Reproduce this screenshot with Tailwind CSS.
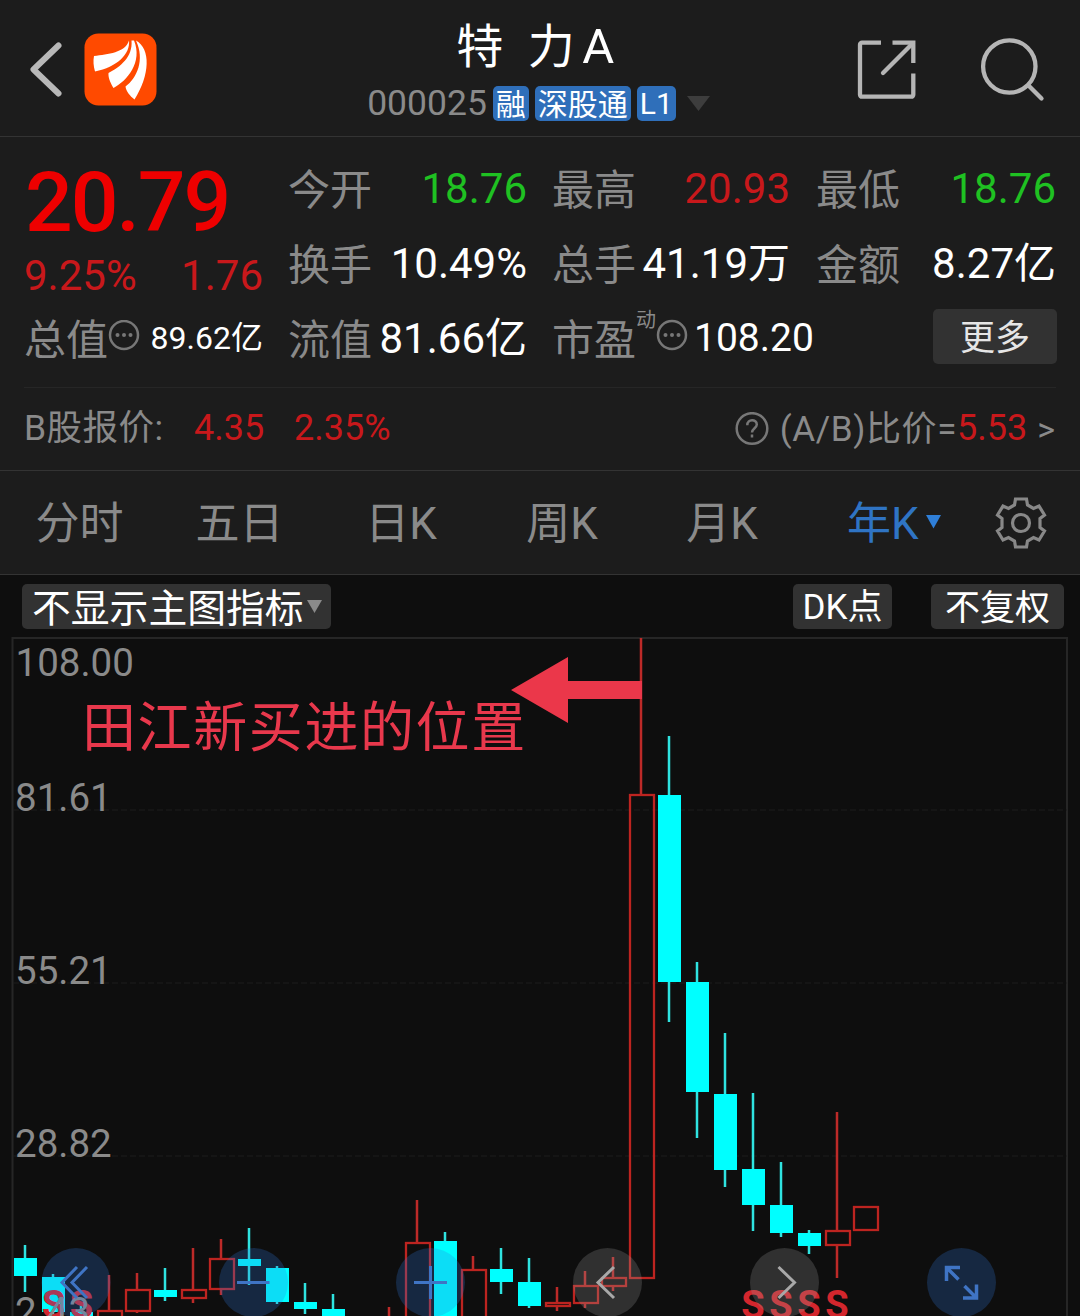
<!DOCTYPE html>
<html lang="zh-CN">
  <head>
    <meta charset="UTF-8" />
    <meta name="viewport" content="width=device-width, initial-scale=1.0" />
    <script src="https://cdn.jsdelivr.net/npm/@tailwindcss/browser@4"></script>
    <title>特力A 000025</title>
  </head>
  <body class="bg-[#0e0e0e]">
    <div
      class="w-[1080px] h-[1316px] overflow-hidden flex flex-col bg-[#1c1c1c] text-[#8a8a8a] leading-none whitespace-nowrap font-['Roboto','Noto_Sans_CJK_SC',sans-serif]"
    >
      <!-- Header -->
      <header
        class="h-[137px] shrink-0 flex items-start justify-between border-b border-[#333333] pl-6 pr-8"
      >
        <div class="w-[300px] flex pt-[33px] gap-5">
          <svg class="w-10 h-[72px]" viewBox="24 33 40 72" fill="none">
            <path
              d="M58.5 45.5L33.5 69.5L58.5 93.5"
              stroke="#b8b8b8"
              stroke-width="6"
              stroke-linecap="round"
              stroke-linejoin="round"
            />
          </svg>
          <svg class="w-[73px] h-[73px]" viewBox="84 33 73 73">
            <rect x="84.5" y="33.5" width="72" height="72" rx="14" fill="#ff4a00" />
            <g fill="#fff">
              <path d="M94 56C108 54 125 53 129 40.5C130.5 54 117 67 95 71.5C93.5 66 93 61 94 56Z" />
              <path d="M131.5 40.5C133 57 120 67 108.5 73C108 78 111 84 113.5 88C127 81 143 62 134 40.5Z" />
              <path d="M136 40.5C151 49 150 75 134.5 99.5C130 96 126 91 125.5 86.5C137 78 145 60 136 40.5Z" />
            </g>
          </svg>
        </div>
        <div class="flex flex-col items-center pt-[22px] pl-[5px]">
          <h1 class="h-[50px] text-[47px] leading-[50px] tracking-[6.5px] text-white">特 力<span class="text-[49px] ml-px">A</span></h1>
          <div class="h-[35px] mt-[14px] flex items-center gap-[6px] text-[30px] text-white">
            <span class="text-[35.5px] text-[#8a8a8a]">000025</span>
            <span class="w-9 h-[35px] leading-[37px] text-center rounded-[5px] bg-[#2f6fba]">融</span>
            <span class="w-24 h-[35px] leading-[37px] text-center rounded-[5px] bg-[#2f6fba]">深股通</span>
            <span class="w-[39px] h-[35px] leading-[35px] text-center rounded-[5px] bg-[#2f6fba]">L1</span>
            <svg class="w-[23px] h-[15px] ml-[5px]" viewBox="0 0 23 15">
              <path d="M0 0H23L11.5 15Z" fill="#3d3d3d" />
            </svg>
          </div>
        </div>
        <svg
          class="w-[300px] h-[72px] mt-[33px]"
          viewBox="748 33 300 72"
          fill="none"
          stroke="#b5b5b5"
          stroke-width="4.3"
        >
          <path d="M881 42.7H862a2 2 0 0 0-2 2V94.7a2 2 0 0 0 2 2H911.3a2 2 0 0 0 2-2V73.5" />
          <path d="M892.5 42.7H913.3V63" />
          <path d="M883 73L912 44" stroke-linecap="round" />
          <circle cx="1009.3" cy="66.5" r="26.2" />
          <path d="M1028.5 85.5L1041.5 98.5" stroke-linecap="round" />
        </svg>
      </header>

      <!-- Quote -->
      <section class="h-[251px] shrink-0 mx-6 pt-[14px] flex gap-[26px] text-[42px] border-b border-[#262626]">
        <div class="w-[239px]">
          <div class="h-[98px] pt-[5px] pl-px flex items-center text-[84px] font-medium text-[#ee0000] tracking-[-2px]">20.79</div>
          <div class="h-[54px] flex items-center justify-between text-[#c8181b]">
            <span>9.25%</span><span>1.76</span>
          </div>
          <div class="h-[73px] flex items-center">
            <span class="pt-[3px]">总值</span>
            <svg class="w-8 h-8 mb-2 shrink-0" viewBox="0 0 32 32" fill="#777777">
              <circle cx="16" cy="15" r="14" fill="none" stroke="#777777" stroke-width="2.5" />
              <circle cx="9.5" cy="15" r="2" /><circle cx="16" cy="15" r="2" /><circle cx="22.5" cy="15" r="2" />
            </svg>
            <span class="ml-auto pb-[3px] text-[32px] text-white">89.62亿</span>
          </div>
        </div>
        <div class="w-[238px]">
          <div class="h-[75px] flex items-center justify-between">
            <span class="pt-1 -ml-px">今开</span><span class="text-[#1fc122]">18.76</span>
          </div>
          <div class="h-[75px] flex items-center justify-between">
            <span class="pt-1 -ml-px">换手</span><span class="text-white">10.49%</span>
          </div>
          <div class="h-[75px] flex items-center justify-between">
            <span class="pt-1 -ml-px">流值</span><span class="pt-px text-white">81.66亿</span>
          </div>
        </div>
        <div class="w-[237px]">
          <div class="h-[75px] flex items-center justify-between">
            <span class="pt-1 -ml-px">最高</span><span class="text-[#c8181b]">20.93</span>
          </div>
          <div class="h-[75px] flex items-center justify-between">
            <span class="pt-1 -ml-px">总手</span><span class="text-white">41.19万</span>
          </div>
          <div class="h-[75px] flex items-center">
            <span class="pt-1 -ml-px">市盈</span>
            <span class="text-[20px] mb-[38px]">动</span>
            <svg class="w-8 h-8 mb-2 shrink-0" viewBox="0 0 32 32" fill="#777777">
              <circle cx="16" cy="16" r="14" fill="none" stroke="#777777" stroke-width="2.5" />
              <circle cx="9.5" cy="16" r="2" /><circle cx="16" cy="16" r="2" /><circle cx="22.5" cy="16" r="2" />
            </svg>
            <span class="ml-[6px] text-[39px] text-white">108.20</span>
          </div>
        </div>
        <div class="w-[240px]">
          <div class="h-[75px] flex items-center justify-between">
            <span class="pt-1">最低</span><span class="text-[#1fc122]">18.76</span>
          </div>
          <div class="h-[75px] flex items-center justify-between">
            <span class="pt-1">金额</span><span class="text-white">8.27亿</span>
          </div>
          <div class="h-[75px] flex items-center justify-end">
            <button class="w-[124px] h-[55px] -mr-px mb-[5px] pt-1 rounded-[5px] bg-[#323232] text-[35px] text-[#e6e6e6]">更多</button>
          </div>
        </div>
      </section>

      <!-- B share -->
      <section class="h-[83px] shrink-0 pl-6 pr-[25px] flex items-center text-[36px] border-b border-[#333333]">
        <span class="w-[170px] text-[35.5px] tracking-[0.5px]">B股报价:</span>
        <span class="w-[100px] -mt-[2px] text-[#c8181b]">4.35</span>
        <span class="-mt-[2px] text-[#c8181b]">2.35%</span>
        <svg class="w-[34px] h-[34px] ml-auto" viewBox="0 0 34 34" fill="none" stroke="#777777" stroke-width="2.5">
          <circle cx="17" cy="16.5" r="15.3" />
          <path d="M12.3 13.2C12.3 6.500 21.8 6.800 21.8 12.6C21.8 16 17 16.500 17 20.5" />
          <path d="M17 22.500V25.500" />
        </svg>
        <span class="ml-[11px] text-[35px] tracking-[0.6px]">(A/B)比价=</span>
        <span class="-mt-[2px] text-[#c8181b]">5.53</span>
        <span class="ml-[10px] text-[34px]">&gt;</span>
      </section>

      <!-- Period tabs -->
      <nav class="h-[104px] shrink-0 pt-[3px] flex items-center text-[44px] border-b border-[#333333]">
        <span class="w-[159px] text-center">分时</span>
        <span class="w-[161px] text-center">五日</span>
        <span class="w-[162px] text-center">日K</span>
        <span class="w-40 text-center">周K</span>
        <span class="w-40 text-center">月K</span>
        <span class="w-[193px] pl-[45px] flex items-center justify-start text-[#2f74c4]">
          <span class="w-[72px]">年K</span>
          <svg class="w-[15px] h-[14px] ml-[7px] mb-[5px]" viewBox="0 0 15 14"><path d="M0 0H15L7.5 13.5Z" fill="#2f7fd8" /></svg>
        </span>
        <svg class="w-[54px] h-[54px] -ml-px mb-[3px]" viewBox="-27 -27 54 54" fill="none" stroke="#888888" stroke-width="3.2">
          <path
            d="M-5.5 -24H5.5L6.5 -18L12.5 -14.5L18 -17L23.5 -8L19 -4.5V4.5L23.5 8L18 17L12.5 14.5L6.5 18L5.5 24H-5.5L-6.5 18L-12.5 14.5L-18 17L-23.5 8L-19 4.5V-4.5L-23.5 -8L-18 -17L-12.5 -14.5L-6.5 -18Z"
          />
          <circle r="8.5" />
        </svg>
      </nav>

      <!-- Chart -->
      <main class="relative grow bg-[#0e0e0e]">
        <div class="flex items-center pt-[9px] pl-[22px] pr-4 text-[35px] text-white">
          <div class="w-[309px] h-[45px] pl-[10px] flex items-center gap-[3px] rounded-[5px] bg-[#323232] text-[38.8px]">
            <span class="pt-[5px]">不显示主图指标</span>
            <svg class="w-[15px] h-[13px]" viewBox="0 0 15 13"><path d="M0 0H15L7.5 13Z" fill="#8a8a8a" /></svg>
          </div>
          <div class="w-[99px] h-[45px] leading-[47px] ml-auto text-center rounded-[5px] bg-[#323232]">DK点</div>
          <div class="w-[133px] h-[45px] leading-[49px] ml-[39px] text-center rounded-[5px] bg-[#323232]">不复权</div>
        </div>
        <svg class="absolute left-0 top-0 w-[1080px] h-[741px]" viewBox="0 575 1080 741">
          <path d="M12.5 1316V638H1067V1316" fill="none" stroke="#262626" stroke-width="2" />
          <g stroke="#1d1d1d" stroke-dasharray="6 3">
            <path d="M13 810H1067" /><path d="M13 983H1067" /><path d="M13 1156H1067" />
          </g>
          <g id="candles"></g>
          <g fill="#d3262d" font-size="38" font-weight="700" text-anchor="middle">
            <text x="53.5" y="1318">S</text><text x="81.5" y="1318">S</text>
            <text x="753" y="1318">S</text><text x="781" y="1318">S</text>
            <text x="809" y="1318">S</text><text x="837" y="1318">S</text>
          </g>
          <g fill="#8a8a8a" font-size="38.5">
            <text x="15.5" y="676">108.00</text>
            <text x="15" y="811">81.61</text>
            <text x="15" y="984">55.21</text>
            <text x="15" y="1156.5">28.82</text>
            <text x="15" y="1325">2.43</text>
          </g>
          <text x="82" y="747" font-size="54" letter-spacing="1.6" fill="#e8384c">田江新买进的位置</text>
          <path d="M511 690L568 657V681H642V699H568V723Z" fill="#eb374a" />

          <g fill="#3078dc" fill-opacity="0.25">
            <circle cx="76" cy="1282.5" r="34.5" />
            <circle cx="253.5" cy="1282.5" r="34.5" />
            <circle cx="430.5" cy="1282.5" r="34.5" />
            <circle cx="961.5" cy="1282.5" r="34.5" />
          </g>
          <g fill="#969696" fill-opacity="0.25">
            <circle cx="607.5" cy="1282.5" r="34.5" />
            <circle cx="784.5" cy="1282.5" r="34.5" />
          </g>
          <g fill="none" stroke="#3f74c4" stroke-width="3">
            <path d="M77 1267L62 1282.5L77 1298M87 1267L72 1282.5L87 1298" />
            <path d="M237 1282.5H269.5" />
            <path d="M414 1282.5H447M430.5 1266V1299" />
            <path d="M946.5 1281V1267.5H960M947 1268L958.5 1279.5M963 1298H976.5V1284.5M976 1297.5L964.5 1286" stroke-width="3.5" />
          </g>
          <g fill="none" stroke="#a8a8a8" stroke-width="3">
            <path d="M614 1267L598 1282.5L614 1298" />
            <path d="M778.5 1267L794.5 1282.5L778.5 1298" />
          </g>
        </svg>
      </main>
    </div>

    <script>
      // [high, body top, body bottom, low, direction], one entry per year
      const candles = [
        [1245, 1258, 1276, 1292, "down"],
        [1274, 1277, 1312, 1316, "down"],
        [1305, 1312, 1330, 1330, "down"],
        [1275, 1310, 1330, 1330, "up"],
        [1273, 1289, 1312, 1313, "up"],
        [1268, 1290, 1297, 1301, "down"],
        [1248, 1289, 1299, 1303, "up"],
        [1239, 1258, 1290, 1295, "up"],
        [1228, 1259, 1266, 1285, "down"],
        [1266, 1268, 1302, 1304, "down"],
        [1283, 1302, 1309, 1314, "down"],
        [1294, 1309, 1330, 1330, "down"],
        null,
        [1307, 1320, 1330, 1330, "up"],
        [1200, 1242, 1330, 1330, "up"],
        [1232, 1241, 1330, 1330, "down"],
        [1256, 1269, 1330, 1330, "up"],
        [1248, 1269, 1282, 1294, "down"],
        [1258, 1282, 1306, 1308, "down"],
        [1287, 1302, 1307, 1311, "up"],
        [1271, 1285, 1304, 1308, "up"],
        [1257, 1277, 1287, 1291, "up"],
        [638, 794, 1279, 1279, "up"],
        [736, 795, 982, 1022, "down"],
        [962, 982, 1092, 1138, "down"],
        [1033, 1094, 1170, 1187, "down"],
        [1093, 1169, 1205, 1231, "down"],
        [1162, 1205, 1233, 1237, "down"],
        [1230, 1233, 1246, 1254, "down"],
        [1112, 1230, 1246, 1278, "up"],
        [1206, 1206, 1231, 1231, "up"],
      ];

      const step = 28;
      const firstX = 25;

      document.getElementById("candles").innerHTML = candles
        .map((candle, i) => {
          if (!candle) return "";
          const [high, top, bottom, low, direction] = candle;
          const x = firstX + i * step;
          if (direction === "down") {
            return `<path d="M${x} ${high}V${low}" stroke="#2fe3e0" stroke-width="2.5" />
              <rect x="${x - 11}" y="${top}" width="23" height="${bottom - top}" fill="#00ffff" />`;
          }
          return `<path d="M${x} ${high}V${top}M${x} ${bottom}V${low}" stroke="#bd2a28" stroke-width="2.5" />
            <rect x="${x - 11}" y="${top + 1}" width="24" height="${bottom - top - 2}" fill="none" stroke="#bd2420" stroke-width="2.3" />`;
        })
        .join("");
    </script>
  </body>
</html>
